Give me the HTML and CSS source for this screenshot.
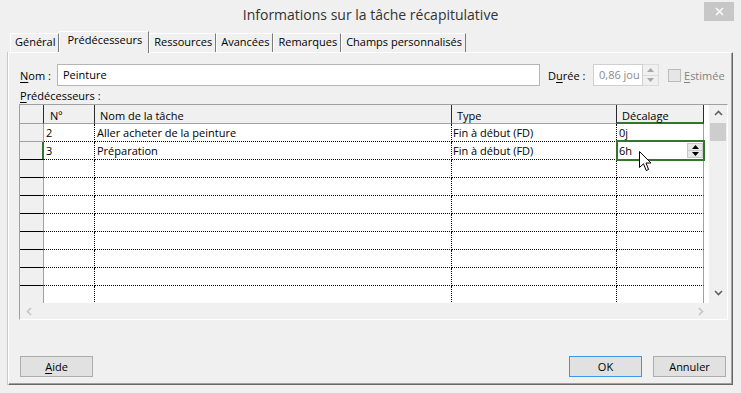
FILE: index.html
```html
<!DOCTYPE html>
<html lang="fr">
<head>
<meta charset="utf-8">
<title>Informations sur la tâche récapitulative</title>
<link rel="stylesheet" href="styles.css">
</head>
<body>
<div class="window">
  <div class="titlebar">
    <span class="title">Informations sur la tâche récapitulative</span>
    <div class="close"><svg width="9" height="9" viewBox="0 0 9 9"><path d="M1 1 L8 8 M8 1 L1 8" stroke="#fff" stroke-width="1.4" fill="none"/></svg></div>
  </div>
  <div class="body">
    <div class="tabs">
      <div class="tab">Général</div>
      <div class="tab active">Prédécesseurs</div>
      <div class="tab">Ressources</div>
      <div class="tab">Avancées</div>
      <div class="tab">Remarques</div>
      <div class="tab">Champs personnalisés</div>
    </div>
    <div class="panel">
      <div class="field-row">
        <span class="lbl-nom"><u>N</u>om :</span>
        <div class="input input-nom">Peinture</div>
        <span class="lbl-duree">D<u>u</u>rée :</span>
        <div class="input input-duree">0,86 jou</div>
        <div class="spin-dis">
          <div class="spin-half"><svg width="7" height="4" viewBox="0 0 7 4"><path d="M0 4 L3.5 0 L7 4 Z" fill="#a8a8a8"/></svg></div>
          <div class="spin-half"><svg width="7" height="4" viewBox="0 0 7 4"><path d="M0 0 L3.5 4 L7 0 Z" fill="#a8a8a8"/></svg></div>
        </div>
        <span class="checkbox"></span>
        <span class="lbl-est"><u>E</u>stimée</span>
      </div>
      <div class="pred-label"><u>P</u>rédécesseurs :</div>
      <div class="gridbox">
        <div class="grid-main">
          <div class="table">
            <div class="trow thead">
              <div class="hc c0"></div>
              <div class="hc c1">Nº</div>
              <div class="hc c2">Nom de la tâche</div>
              <div class="hc c3">Type</div>
              <div class="hc c4 sel">Décalage</div>
              <div class="c5"></div>
            </div>
            <div class="trow">
              <div class="rh first"></div>
              <div class="cell c1">2</div>
              <div class="cell c2">Aller acheter de la peinture</div>
              <div class="cell c3">Fin à début (FD)</div>
              <div class="cell c4">0j</div>
              <div class="c5"></div>
            </div>
            <div class="trow">
              <div class="rh active-rh"></div>
              <div class="cell c1">3</div>
              <div class="cell c2">Préparation</div>
              <div class="cell c3">Fin à début (FD)</div>
              <div class="cell c4 edit-host">
                <div class="editor">
                  <span class="edit-text">6h</span>
                  <div class="spin">
                    <div class="spin-half"><svg width="7" height="4" viewBox="0 0 7 4"><path d="M0 4 L3.5 0 L7 4 Z" fill="#000"/></svg></div>
                    <div class="spin-half"><svg width="7" height="4" viewBox="0 0 7 4"><path d="M0 0 L3.5 4 L7 0 Z" fill="#000"/></svg></div>
                  </div>
                  <svg class="cursor" width="13" height="21" viewBox="0 0 13 21"><path d="M0.5 0.5 L0.5 16.5 L4.5 12.8 L7.2 19.5 L9.6 18.5 L7 12 L12 12 Z" fill="#fff" stroke="#000" stroke-width="1" stroke-linejoin="miter"/></svg>
                </div>
              </div>
              <div class="c5"></div>
            </div>
            <div class="trow"><div class="rh"></div><div class="cell c1"></div><div class="cell c2"></div><div class="cell c3"></div><div class="cell c4"></div><div class="c5"></div></div>
            <div class="trow"><div class="rh"></div><div class="cell c1"></div><div class="cell c2"></div><div class="cell c3"></div><div class="cell c4"></div><div class="c5"></div></div>
            <div class="trow"><div class="rh"></div><div class="cell c1"></div><div class="cell c2"></div><div class="cell c3"></div><div class="cell c4"></div><div class="c5"></div></div>
            <div class="trow"><div class="rh"></div><div class="cell c1"></div><div class="cell c2"></div><div class="cell c3"></div><div class="cell c4"></div><div class="c5"></div></div>
            <div class="trow"><div class="rh"></div><div class="cell c1"></div><div class="cell c2"></div><div class="cell c3"></div><div class="cell c4"></div><div class="c5"></div></div>
            <div class="trow"><div class="rh"></div><div class="cell c1"></div><div class="cell c2"></div><div class="cell c3"></div><div class="cell c4"></div><div class="c5"></div></div>
            <div class="trow"><div class="rh"></div><div class="cell c1"></div><div class="cell c2"></div><div class="cell c3"></div><div class="cell c4"></div><div class="c5"></div></div>
            <div class="trow"><div class="rh"></div><div class="cell c1"></div><div class="cell c2"></div><div class="cell c3"></div><div class="cell c4"></div><div class="c5"></div></div>
          </div>
          <div class="vscroll">
            <svg class="chev" width="9" height="6" viewBox="0 0 9 6"><path d="M1 5 L4.5 1.5 L8 5" stroke="#606060" stroke-width="1.6" fill="none"/></svg>
            <div class="thumb"></div>
            <div class="vfill"></div>
            <svg class="chev" width="9" height="6" viewBox="0 0 9 6"><path d="M1 1 L4.5 4.5 L8 1" stroke="#606060" stroke-width="1.6" fill="none"/></svg>
          </div>
        </div>
        <div class="hscroll">
          <svg width="6" height="9" viewBox="0 0 6 9"><path d="M5 1 L1.5 4.5 L5 8" stroke="#c4c4c4" stroke-width="1.6" fill="none"/></svg>
          <svg width="6" height="9" viewBox="0 0 6 9"><path d="M1 1 L4.5 4.5 L1 8" stroke="#c4c4c4" stroke-width="1.6" fill="none"/></svg>
        </div>
      </div>
      <div class="buttons">
        <div class="btn"><u>A</u>ide</div>
        <div class="btn ok">OK</div>
        <div class="btn cancel">Annuler</div>
      </div>
    </div>
  </div>
</div>
</body>
</html>
```

FILE: styles.css
```css
html, body {
  margin: 0;
  padding: 0;
  background: #f0f0f0;
}
body {
  font-family: "Open Sans", "Segoe UI", "Noto Sans", sans-serif;
  font-size: 11px;
  color: #000;
}
u { text-decoration-thickness: 1px; text-underline-offset: 2px; }

.window {
  width: 741px;
  height: 393px;
  overflow: hidden;
  background: #f0f0f0;
  box-sizing: border-box;
}

.titlebar {
  position: relative;
  height: 31px;
  box-sizing: border-box;
  padding-top: 5px;
  text-align: center;
  font-size: 14px;
  color: #333;
}
.close {
  position: absolute;
  right: 7px;
  top: 2px;
  width: 30px;
  height: 19px;
  background: #c7c7c7;
  display: flex;
  align-items: center;
  justify-content: center;
}

.body {
  padding: 0 8px;
}

.tabs {
  display: flex;
  align-items: flex-end;
  height: 21px;
  margin-left: 2px;
}
.tab {
  box-sizing: border-box;
  height: 19px;
  padding: 0 3px 0 4px;
  line-height: 16px;
  border-top: 1px solid #fff;
  border-left: 1px solid #fff;
  border-right: 1px solid #7a7a7a;
  white-space: nowrap;
  background: #f0f0f0;
}
.tab.active {
  height: 22px;
  margin-bottom: -1px;
  position: relative;
  z-index: 1;
  padding: 0 6px 0 7px;
}

.panel {
  box-sizing: border-box;
  height: 333px;
  border-top: 1px solid #fff;
  border-left: 1px solid #fff;
  border-right: 1px solid #696969;
  border-bottom: 1px solid #696969;
  box-shadow: inset -1px -1px 0 #a0a0a0, -1px 0 0 #c8c8c8;
  padding: 11px 4px 0 10px;
}

.field-row {
  display: flex;
  align-items: center;
  height: 22px;
}
.lbl-nom {
  width: 38px;
  padding-left: 1px;
  box-sizing: border-box;
}
.input {
  box-sizing: border-box;
  height: 22px;
  border: 1px solid #b5b5b5;
  background: #fff;
  padding-left: 5px;
  line-height: 20px;
  white-space: nowrap;
  overflow: hidden;
}
.input-nom { width: 483px; }
.lbl-duree {
  margin-left: 8px;
  width: 45px;
}
.input-duree {
  width: 50px;
  color: #8a8a8a;
  border-color: #cfcfcf;
}
.spin-dis {
  box-sizing: border-box;
  width: 16px;
  height: 22px;
  display: flex;
  flex-direction: column;
  border: 1px solid #dcdcdc;
  border-left: none;
}
.spin-dis .spin-half {
  flex: 1;
  display: flex;
  align-items: center;
  justify-content: center;
}
.spin-dis .spin-half + .spin-half { border-top: 1px solid #dcdcdc; }
.checkbox {
  margin-left: 9px;
  width: 13px;
  height: 13px;
  box-sizing: border-box;
  border: 1px solid #bcbcbc;
  background: #e6e6e6;
}
.lbl-est {
  margin-left: 3px;
  color: #838383;
}

.pred-label {
  height: 18px;
  line-height: 19px;
  padding-left: 1px;
}

.gridbox {
  width: 709px;
  box-sizing: border-box;
  border-top: 1px solid #a0a0a0;
  border-left: 1px solid #a0a0a0;
  border-right: 1px solid #fff;
  border-bottom: 1px solid #fff;
}
.grid-main {
  display: flex;
  height: 198px;
}
.table {
  width: 689px;
  height: 198px;
  overflow: hidden;
  background: #fff;
}
.trow {
  display: flex;
}
.c0, .rh { width: 24px; flex: none; }
.c1 { width: 51px; flex: none; }
.c2 { width: 357px; flex: none; }
.c3 { width: 165px; flex: none; }
.c4 { width: 87px; flex: none; }
.c5 { width: 5px; flex: none; }

.hc {
  box-sizing: border-box;
  height: 19px;
  background: #f0f0f0;
  border-bottom: 1px solid #a0a0a0;
  border-right: 1px solid #2a2a2a;
  padding: 2px 0 0 5px;
  line-height: 17px;
  white-space: nowrap;
}
.hc.c1 { padding-left: 6px; }
.hc.sel { border-bottom: 2px solid #31752f; }

.rh {
  box-sizing: border-box;
  height: 18px;
  background: #f0f0f0;
  border-right: 1px solid #a0a0a0;
  border-bottom: 1px solid #000;
}
.rh.first { border-bottom-color: #a0a0a0; }
.rh.active-rh {
  border-right-color: #31752f;
  box-shadow: inset -1px 0 0 #31752f;
}

.cell {
  box-sizing: border-box;
  height: 18px;
  border-bottom: 1px dotted #000;
  border-right: 1px dotted #000;
  line-height: 17px;
  padding-left: 2px;
  white-space: nowrap;
  overflow: hidden;
}
.cell.c3 { padding-left: 1px; }
.cell.c4 { border-right: 1px solid #a0a0a0; }
.edit-host {
  position: relative;
  overflow: visible;
}
.editor {
  position: absolute;
  left: -1px;
  top: -2px;
  width: 89px;
  height: 21px;
  box-sizing: border-box;
  border: 2px solid #31752f;
  background: #fff;
  display: flex;
  justify-content: space-between;
  align-items: flex-start;
  z-index: 2;
}
.edit-text {
  padding-left: 1px;
  line-height: 17px;
}
.spin {
  box-sizing: border-box;
  width: 16px;
  height: 15px;
  margin-top: 1px;
  border: 1px solid #c9c9c9;
  background: #e8e8e8;
  display: flex;
  flex-direction: column;
}
.spin .spin-half {
  flex: 1;
  display: flex;
  align-items: center;
  justify-content: center;
}
.spin .spin-half + .spin-half { border-top: 1px solid #c9c9c9; }
.cursor {
  position: absolute;
  left: 21px;
  top: 9px;
}

.vscroll {
  width: 18px;
  height: 198px;
  background: #f0f0f0;
  display: flex;
  flex-direction: column;
  align-items: center;
}
.vscroll .chev { margin-top: 5px; flex: none; }
.vscroll .chev:last-child { margin-top: 0; margin-bottom: 7px; }
.thumb {
  margin-top: 7px;
  width: 16px;
  height: 18px;
  background: #cdcdcd;
  flex: none;
}
.vfill { flex: 1; }

.hscroll {
  height: 16px;
  background: #f0f0f0;
  display: flex;
  align-items: center;
  justify-content: space-between;
  padding: 0 23px 0 6px;
}

.buttons {
  display: flex;
  margin-top: 36px;
  padding: 0 2px 0 1px;
}
.btn {
  box-sizing: border-box;
  width: 73px;
  height: 21px;
  border: 1px solid #adadad;
  background: #e1e1e1;
  text-align: center;
  line-height: 19px;
}
.btn.ok {
  margin-left: auto;
  border-color: #3a96ef;
}
.btn.cancel {
  margin-left: 11px;
}
```
